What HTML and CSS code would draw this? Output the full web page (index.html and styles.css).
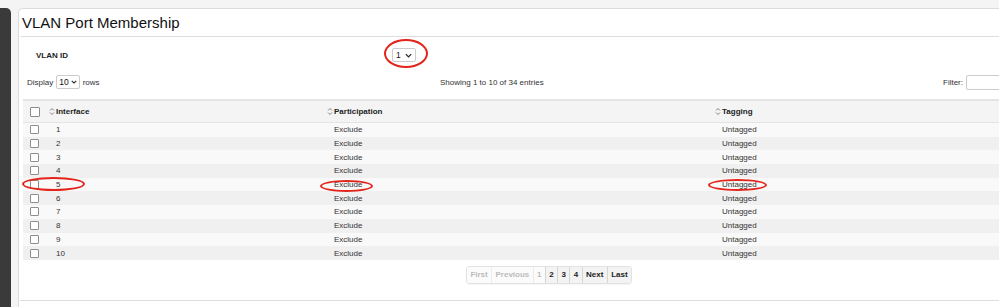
FILE: index.html
```html
<!DOCTYPE html>
<html lang="en">

<head>
  <meta charset="UTF-8" />
  <meta name="viewport" content="width=device-width, initial-scale=1.0" />
  <title>VLAN Port Membership</title>
  <link rel="stylesheet" href="styles.css">
</head>

<body>
  <div class="layout">
    <aside class="sidebar"></aside>

    <main class="panel">
      <h1 class="panel-title">VLAN Port Membership</h1>

      <div class="vlan-row">
        <label class="vlan-label">VLAN ID</label>
        <span class="select vlan-select">1
          <svg class="chev" viewBox="0 0 8 5" width="7" height="5"><path d="M1 1 L4 4 L7 1" /></svg>
        </span>
      </div>

      <div class="toolbar">
        <div class="length">Display
          <span class="select">10
            <svg class="chev" viewBox="0 0 8 5" width="6" height="4"><path d="M1 1 L4 4 L7 1" /></svg>
          </span>
          rows
        </div>
        <div class="info">Showing 1 to 10 of 34 entries</div>
        <div class="filter">Filter: <span class="filter-input"></span></div>
      </div>

      <div class="grid">
        <div class="grid-head">
          <div class="cell"><span class="check"></span></div>
          <div class="cell"><svg class="sort" viewBox="0 0 6 9" width="6" height="9"><path d="M1 3.5 L3 1.5 L5 3.5 M1 5.5 L3 7.5 L5 5.5" /></svg>Interface</div>
          <div class="cell"><svg class="sort" viewBox="0 0 6 9" width="6" height="9"><path d="M1 3.5 L3 1.5 L5 3.5 M1 5.5 L3 7.5 L5 5.5" /></svg>Participation</div>
          <div class="cell"><svg class="sort" viewBox="0 0 6 9" width="6" height="9"><path d="M1 3.5 L3 1.5 L5 3.5 M1 5.5 L3 7.5 L5 5.5" /></svg>Tagging</div>
        </div>
        <div id="rows"></div>
      </div>

      <div class="pager-wrap">
        <div class="pager">
          <span class="page off">First</span>
          <span class="page off">Previous</span>
          <span class="page off">1</span>
          <span class="page">2</span>
          <span class="page">3</span>
          <span class="page">4</span>
          <span class="page">Next</span>
          <span class="page">Last</span>
        </div>
      </div>

      <div class="panel-foot"></div>
    </main>
  </div>

  <!-- annotation marks -->
  <span class="mark" style="left:384px;top:39px;width:44px;height:29px;"></span>
  <span class="mark" style="left:22px;top:177px;width:63px;height:14px;"></span>
  <span class="mark" style="left:320px;top:180px;width:53px;height:12px;"></span>
  <span class="mark" style="left:708px;top:179px;width:59px;height:12px;"></span>

  <script>
    const rows = document.getElementById("rows");
    for (let i = 1; i <= 10; i++) {
      const row = document.createElement("div");
      row.className = "grid-row";
      row.innerHTML = `
        <div class="cell"><span class="check"></span></div>
        <div class="cell">${i}</div>
        <div class="cell">Exclude</div>
        <div class="cell">Untagged</div>`;
      rows.appendChild(row);
    }
  </script>
</body>

</html>
```

FILE: styles.css
```css
body {
  margin: 0;
  padding: 0;
  background: #f4f4f4;
  color: #333;
  font-family: "Liberation Sans", Arial, Helvetica, sans-serif;
  font-size: 8px;
  overflow: hidden;
  position: relative;
  height: 307px;
}

.layout {
  display: flex;
  gap: 7px;
  padding-top: 8px;
  height: 299px;
}

.sidebar {
  width: 11px;
  flex: none;
  background: #3a3a3a;
  border-top-right-radius: 5px;
}

.panel {
  flex: none;
  width: 1100px;
  background: #fff;
  border: 1px solid #dcdcdc;
  border-right: none;
  border-bottom: none;
  border-top-left-radius: 5px;
}

.panel-title {
  margin: 0 0 0 2px;
  padding-left: 1px;
  height: 27px;
  line-height: 27px;
  font-size: 15px;
  font-weight: normal;
  color: #111;
  border-bottom: 1px solid #ddd;
}

.vlan-row {
  display: flex;
  align-items: center;
  height: 36px;
  padding-left: 17px;
}

.vlan-label {
  width: 356px;
  font-weight: bold;
  color: #222;
}

.select {
  display: inline-flex;
  align-items: center;
  gap: 2px;
  height: 14px;
  padding: 0 2px;
  box-sizing: border-box;
  border: 1px solid #ccc;
  border-radius: 2px;
  background: #fff;
  color: #111;
  font-size: 8.5px;
}

.vlan-select {
  gap: 4px;
  padding: 0 3px;
}

.chev path {
  fill: none;
  stroke: #222;
  stroke-width: 1.4;
}

.toolbar {
  display: grid;
  grid-template-columns: 413px 503px auto;
  align-items: center;
  height: 18px;
  padding-left: 8px;
  margin-bottom: 8px;
}

.length {
  display: flex;
  align-items: center;
  gap: 3px;
}

.filter {
  display: flex;
  align-items: center;
  gap: 3px;
}

.filter-input {
  width: 120px;
  height: 15px;
  box-sizing: border-box;
  border: 1px solid #ccc;
  border-radius: 2px;
}

.grid {
  margin-left: 4px;
  border-top: 2px solid #e4e4e4;
}

.grid-head,
.grid-row {
  display: grid;
  grid-template-columns: 22px 278px 388px 1fr;
  align-items: center;
}

.grid-head {
  height: 21px;
  background: #f4f4f4;
  border-bottom: 1px solid #e4e4e4;
  font-weight: bold;
  color: #222;
}

.grid-head .cell {
  display: flex;
  align-items: center;
  gap: 1px;
  padding-left: 4px;
}

.grid-head .cell:first-child,
.grid-row .cell:first-child {
  padding-left: 7px;
  display: flex;
}

.grid-row {
  height: 13.7px;
  background: #f9f9f9;
}

.grid-row:nth-child(even) {
  background: #f0f0f0;
}

.grid-row .cell {
  padding-left: 11px;
}

.sort path {
  fill: none;
  stroke: #666;
  stroke-width: 0.8;
}

.check {
  width: 10px;
  height: 10px;
  box-sizing: border-box;
  border: 1px solid #8e8e8e;
  border-radius: 1px;
  background: #fff;
}

.grid-row .check {
  width: 9px;
  height: 9px;
}

.pager-wrap {
  padding: 6px 0 0 447px;
  height: 40px;
  box-sizing: border-box;
}

.pager {
  display: inline-flex;
  height: 18px;
  border: 1px solid #e2e2e2;
  border-radius: 3px;
  box-sizing: border-box;
  box-shadow: 0 1px 1px rgba(0, 0, 0, 0.04);
  overflow: hidden;
}

.page {
  display: flex;
  align-items: center;
  padding: 0 3.4px;
  font-weight: bold;
  color: #222;
  background: #f3f3f3;
  border-left: 1px solid #d6d6d6;
}

.page:first-child {
  border-left: none;
}

.page.off {
  color: #bbb;
  background: #fbfbfb;
  border-left-color: #ececec;
}

.panel-foot {
  margin-left: 1px;
  border-top: 1px solid #ddd;
}

.mark {
  position: absolute;
  box-sizing: border-box;
  border: 2px solid #e3241b;
  border-radius: 50%;
}
```
